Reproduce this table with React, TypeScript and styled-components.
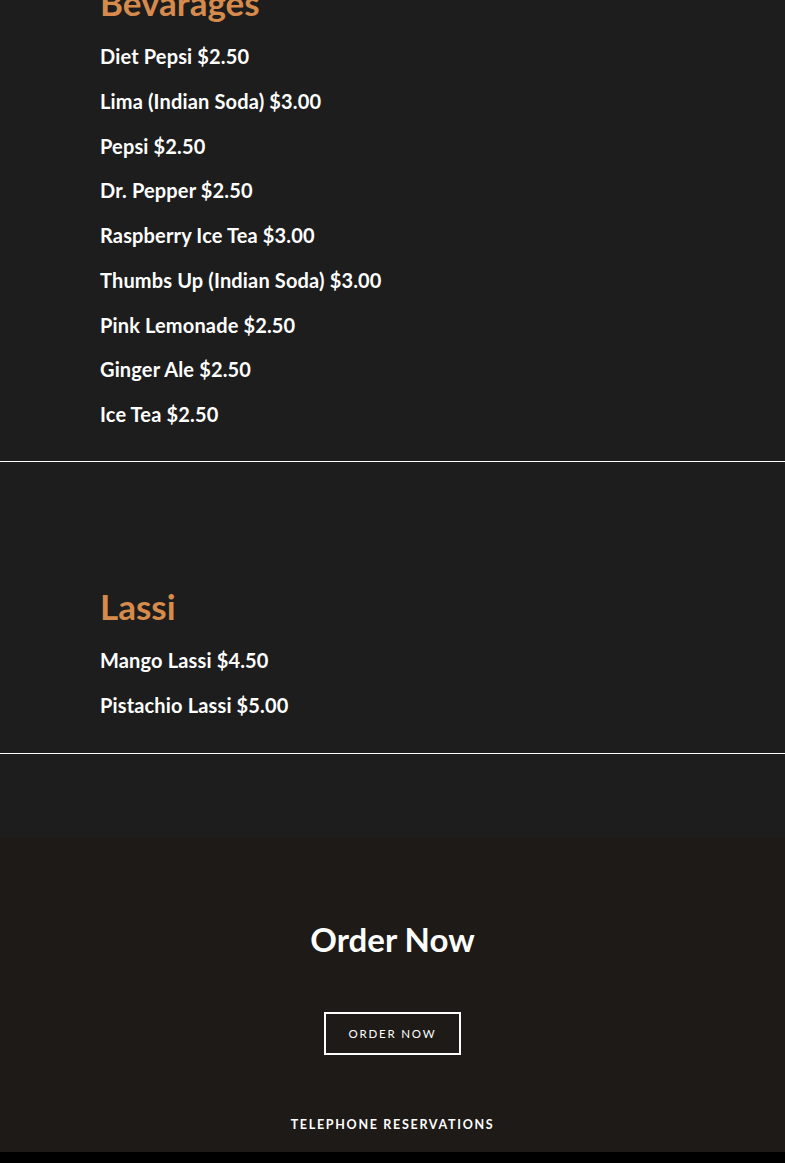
import React from 'react';
import styled, { createGlobalStyle } from 'styled-components';

type MenuSection = {
    title: string;
    items: string[];
};

const bevarages: MenuSection = {
    title: 'Bevarages',
    items: [
        'Diet Pepsi $2.50',
        'Lima (Indian Soda) $3.00',
        'Pepsi $2.50',
        'Dr. Pepper $2.50',
        'Raspberry Ice Tea $3.00',
        'Thumbs Up (Indian Soda) $3.00',
        'Pink Lemonade $2.50',
        'Ginger Ale $2.50',
        'Ice Tea $2.50',
    ],
};

const lassi: MenuSection = {
    title: 'Lassi',
    items: ['Mango Lassi $4.50', 'Pistachio Lassi $5.00'],
};

const GlobalStyle = createGlobalStyle`
    html, body {
        margin: 0;
        padding: 0;
        background: #1d1d1d;
    }
    body {
        font-family: Lato, "Open Sans", sans-serif;
        overflow: hidden;
    }
`;

const Page = styled.div`
    display: flex;
    flex-direction: column;
    height: 1163px;
    overflow: hidden;
`;

const Block = styled.section<{ $first?: boolean }>`
    padding: ${({ $first }) => ($first ? '0 100px 24px' : '124px 100px 26px')};
    border-bottom: 1px solid #ffffff;
`;

const Title = styled.h2<{ $cut?: boolean }>`
    margin: ${({ $cut }) => ($cut ? '-18px 0 0' : '0')};
    font-size: 35px;
    line-height: 40px;
    font-weight: 700;
    color: #d68b4c;
`;

const List = styled.ul`
    list-style: none;
    margin: 12px 0 0;
    padding: 0;
    display: flex;
    flex-direction: column;
`;

const Item = styled.li`
    font-size: 20px;
    line-height: 44.75px;
    font-weight: 700;
    letter-spacing: 0.15px;
    color: #ffffff;
`;

const Spacer = styled.div`
    height: 84px;
    background: #1d1d1d;
`;

const OrderSection = styled.section`
    background: #1e1a17;
    display: flex;
    flex-direction: column;
    align-items: center;
    padding-top: 80px;
    height: 314px;
    box-sizing: border-box;
`;

const OrderTitle = styled.h2`
    margin: 0;
    font-size: 33px;
    line-height: 42px;
    font-weight: 700;
    color: #ffffff;
`;

const OrderButton = styled.a`
    margin-top: 52px;
    width: 137px;
    height: 43px;
    box-sizing: border-box;
    border: 2px solid #ffffff;
    display: flex;
    align-items: center;
    justify-content: center;
    color: #ffffff;
    font-size: 11.5px;
    font-weight: 400;
    letter-spacing: 1.8px;
    text-decoration: none;
`;

const Phone = styled.div`
    margin-top: 62px;
    color: #ffffff;
    font-size: 12.5px;
    font-weight: 700;
    letter-spacing: 1.7px;
`;

const Footer = styled.div`
    flex: 1;
    background: #000000;
`;

const Menu: React.FC<{ section: MenuSection; first?: boolean }> = ({ section, first }) => (
    <Block $first={first}>
        <Title $cut={first}>{section.title}</Title>
        <List>
            {section.items.map((item) => (
                <Item key={item}>{item}</Item>
            ))}
        </List>
    </Block>
);

const App: React.FC = () => (
    <>
        <GlobalStyle />
        <Page>
            <Menu section={bevarages} first />
            <Menu section={lassi} />
            <Spacer />
            <OrderSection>
                <OrderTitle>Order Now</OrderTitle>
                <OrderButton href="#">ORDER NOW</OrderButton>
                <Phone>TELEPHONE RESERVATIONS</Phone>
            </OrderSection>
            <Footer />
        </Page>
    </>
);

export default App;
